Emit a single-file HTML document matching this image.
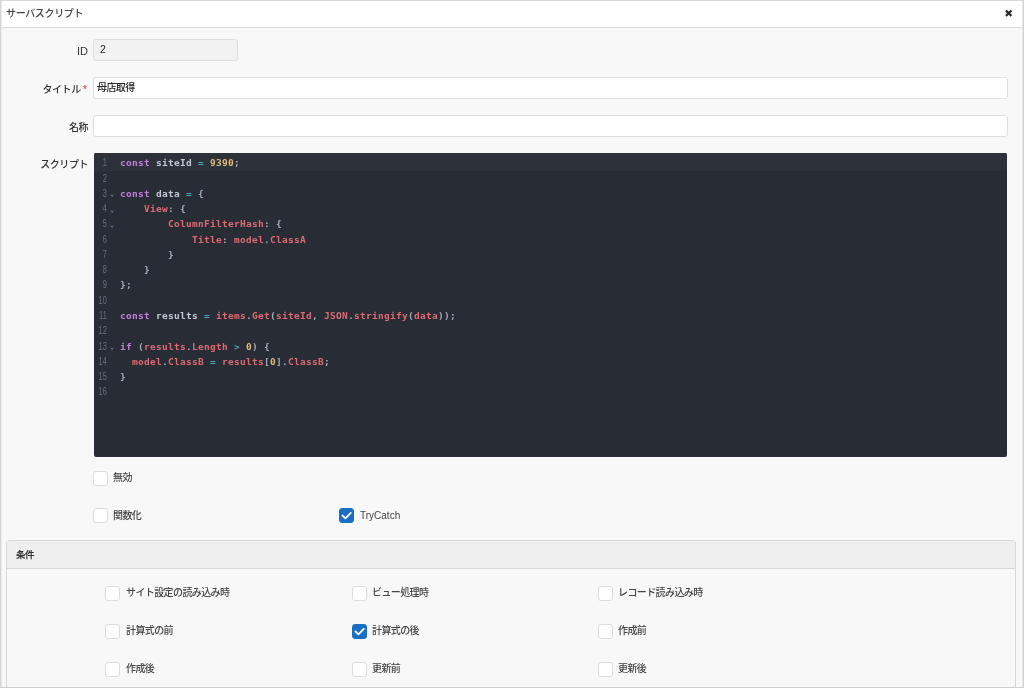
<!DOCTYPE html>
<html lang="ja">
<head>
<meta charset="utf-8">
<title>サーバスクリプト</title>
<style>
*{box-sizing:border-box;margin:0;padding:0}
html,body{width:1024px;height:688px;overflow:hidden;background:#f8f8f8}
body{filter:blur(0.45px)}
body{position:relative;font-family:"Liberation Sans","Noto Sans CJK JP",sans-serif;font-size:11px;color:#333;font-weight:500}
.abs{position:absolute}
#frame{left:0;top:0;width:1024px;height:688px;border-left:1px solid #d4d4d4;border-top:1px solid #d8d8d8;border-right:1px solid #d2d2d2;border-bottom:1px solid #cfcfcf;box-shadow:inset 1px 0 0 #ececec,inset -1px 0 0 #e8e8e8;z-index:5;pointer-events:none}
#titlebar{left:1px;top:1px;width:1022px;height:27px;background:#fff;border-bottom:1px solid #ddd}
#titlebar .t{left:5px;top:5px;font-size:10px;line-height:16px;color:#444;letter-spacing:-0.35px}
#close{left:1002.6px;top:5.3px;width:12px;height:16px;font-family:"DejaVu Sans",sans-serif;font-weight:normal;font-size:10.5px;line-height:16px;color:#2a2a2a;text-align:center}
.lbl{width:88px;left:0;text-align:right;font-size:10px;line-height:16px;color:#333;letter-spacing:-0.45px}
.inp{background:#fff;border:1px solid #dedede;border-radius:3px;height:22px;font-size:10px;line-height:20px;padding-left:3px;color:#222;letter-spacing:-0.6px}
.req{color:#e33;font-size:11px;letter-spacing:0;margin-left:2px;margin-right:1px;position:relative;top:0}
#editor{left:94px;top:153px;width:913px;height:304px;background:#282c34;border-radius:2px;overflow:hidden}
#editor .row{position:absolute;left:0;height:15.27px;line-height:15.27px;white-space:pre;font-family:"DejaVu Sans Mono","Liberation Mono",monospace;font-size:9.5px;letter-spacing:0.28px;font-weight:bold;color:#a4abb8}
#editor .ln{position:absolute;left:-7px;width:20px;text-align:right;color:#697180;font-size:10.5px;font-weight:normal;font-family:"Liberation Sans",sans-serif;transform:scaleX(0.7);transform-origin:100% 50%}
#editor .fold{position:absolute;left:16px;top:1.5px;color:#8a92a0;font-size:7px;font-weight:normal;letter-spacing:0;font-family:"DejaVu Sans Mono","DejaVu Sans",monospace}
#editor .code{position:absolute;left:26px}
.k{color:#c27fd6}.v{color:#dc6a73}.n{color:#dfbb78}.o{color:#4fa8b4}.p{color:#a4abb8}.w{color:#c3c8d2}
.cb{width:15px;height:15px;border:1px solid #dcdcdc;border-radius:3px;background:#fff}
.cb.on{background:#1a6fc4;border-color:#1a6fc4}
.cb.on svg{position:absolute;left:-1px;top:-1px}
.cl{font-size:10px;line-height:16px;color:#444;letter-spacing:-0.6px}
#fs{left:6px;top:540px;width:1010px;height:160px;border:1px solid #d8d8d8;border-radius:3px 3px 0 0;background:#f8f8f8}
#fsh{left:0;top:0;width:1008px;height:28px;background:#efefef;border-bottom:1px solid #d8d8d8}
#fsh span{position:absolute;left:9px;top:5.5px;font-size:9.5px;font-weight:bold;line-height:16px;color:#333;letter-spacing:-0.5px}
</style>
</head>
<body>
<div id="frame" class="abs"></div>
<div id="titlebar" class="abs"><span class="abs t">サーバスクリプト</span></div>
<div id="close" class="abs">✖</div>

<div class="abs lbl" style="top:43px;font-size:11px;letter-spacing:0">ID</div>
<div class="abs inp" style="left:93px;top:39px;width:145px;background:#f2f2f2;padding-left:6px;line-height:18px;font-size:10.5px">2</div>

<div class="abs lbl" style="top:81px">タイトル<span class="req">*</span></div>
<div class="abs inp" style="left:93px;top:77px;width:915px">母店取得</div>

<div class="abs lbl" style="top:119.5px">名称</div>
<div class="abs inp" style="left:93px;top:115px;width:915px"></div>

<div class="abs lbl" style="top:156.5px">スクリプト</div>
<div id="editor" class="abs">
<div class="abs" style="left:0;top:0;width:913px;height:18px;background:#2c313a"></div>
<div class="row" style="top:2.30px"><span class="ln">1</span><span class="code"><span class="k">const</span> <span class="w">siteId</span> <span class="o">=</span> <span class="n">9390</span>;</span></div>
<div class="row" style="top:17.57px"><span class="ln">2</span></div>
<div class="row" style="top:32.83px"><span class="ln">3</span><span class="fold">⌄</span><span class="code"><span class="k">const</span> <span class="w">data</span> <span class="o">=</span> {</span></div>
<div class="row" style="top:48.10px"><span class="ln">4</span><span class="fold">⌄</span><span class="code">    <span class="v">View</span>: {</span></div>
<div class="row" style="top:63.37px"><span class="ln">5</span><span class="fold">⌄</span><span class="code">        <span class="v">ColumnFilterHash</span>: {</span></div>
<div class="row" style="top:78.63px"><span class="ln">6</span><span class="code">            <span class="v">Title</span>: <span class="v">model</span>.<span class="v">ClassA</span></span></div>
<div class="row" style="top:93.90px"><span class="ln">7</span><span class="code">        }</span></div>
<div class="row" style="top:109.17px"><span class="ln">8</span><span class="code">    }</span></div>
<div class="row" style="top:124.43px"><span class="ln">9</span><span class="code">};</span></div>
<div class="row" style="top:139.70px"><span class="ln">10</span></div>
<div class="row" style="top:154.97px"><span class="ln">11</span><span class="code"><span class="k">const</span> <span class="w">results</span> <span class="o">=</span> <span class="v">items</span>.<span class="v">Get</span>(<span class="v">siteId</span>, <span class="v">JSON</span>.<span class="v">stringify</span>(<span class="v">data</span>));</span></div>
<div class="row" style="top:170.23px"><span class="ln">12</span></div>
<div class="row" style="top:185.50px"><span class="ln">13</span><span class="fold">⌄</span><span class="code"><span class="k">if</span> (<span class="v">results</span>.<span class="v">Length</span> <span class="o">&gt;</span> <span class="n">0</span>) {</span></div>
<div class="row" style="top:200.77px"><span class="ln">14</span><span class="code">  <span class="v">model</span>.<span class="v">ClassB</span> <span class="o">=</span> <span class="v">results</span>[<span class="n">0</span>].<span class="v">ClassB</span>;</span></div>
<div class="row" style="top:216.03px"><span class="ln">15</span><span class="code">}</span></div>
<div class="row" style="top:231.30px"><span class="ln">16</span></div>
</div>

<div class="abs cb" style="left:93px;top:471px"></div><div class="abs cl" style="left:113px;top:470px">無効</div>
<div class="abs cb" style="left:93px;top:508px"></div><div class="abs cl" style="left:113px;top:508px">関数化</div>
<div class="abs cb on" style="left:339px;top:508px"><svg width="15" height="15" viewBox="0 0 15 15"><path d="M3.4 7.5 L6.4 10.3 L11.8 4.9" fill="none" stroke="#fff" stroke-width="1.8" stroke-linecap="round" stroke-linejoin="round"/></svg></div><div class="abs cl" style="left:360px;top:508px;letter-spacing:0">TryCatch</div>

<div id="fs" class="abs">
<div id="fsh" class="abs"><span>条件</span></div>
</div>

<div class="abs cb" style="left:105px;top:586px"></div><div class="abs cl" style="left:126px;top:585px">サイト設定の読み込み時</div>
<div class="abs cb" style="left:352px;top:586px"></div><div class="abs cl" style="left:372px;top:585px">ビュー処理時</div>
<div class="abs cb" style="left:598px;top:586px"></div><div class="abs cl" style="left:618px;top:585px">レコード読み込み時</div>

<div class="abs cb" style="left:105px;top:624px"></div><div class="abs cl" style="left:126px;top:623px">計算式の前</div>
<div class="abs cb on" style="left:352px;top:624px"><svg width="15" height="15" viewBox="0 0 15 15"><path d="M3.4 7.5 L6.4 10.3 L11.8 4.9" fill="none" stroke="#fff" stroke-width="1.8" stroke-linecap="round" stroke-linejoin="round"/></svg></div><div class="abs cl" style="left:372px;top:623px">計算式の後</div>
<div class="abs cb" style="left:598px;top:624px"></div><div class="abs cl" style="left:618px;top:623px">作成前</div>

<div class="abs cb" style="left:105px;top:662px"></div><div class="abs cl" style="left:126px;top:661px">作成後</div>
<div class="abs cb" style="left:352px;top:662px"></div><div class="abs cl" style="left:372px;top:661px">更新前</div>
<div class="abs cb" style="left:598px;top:662px"></div><div class="abs cl" style="left:618px;top:661px">更新後</div>
</body>
</html>
